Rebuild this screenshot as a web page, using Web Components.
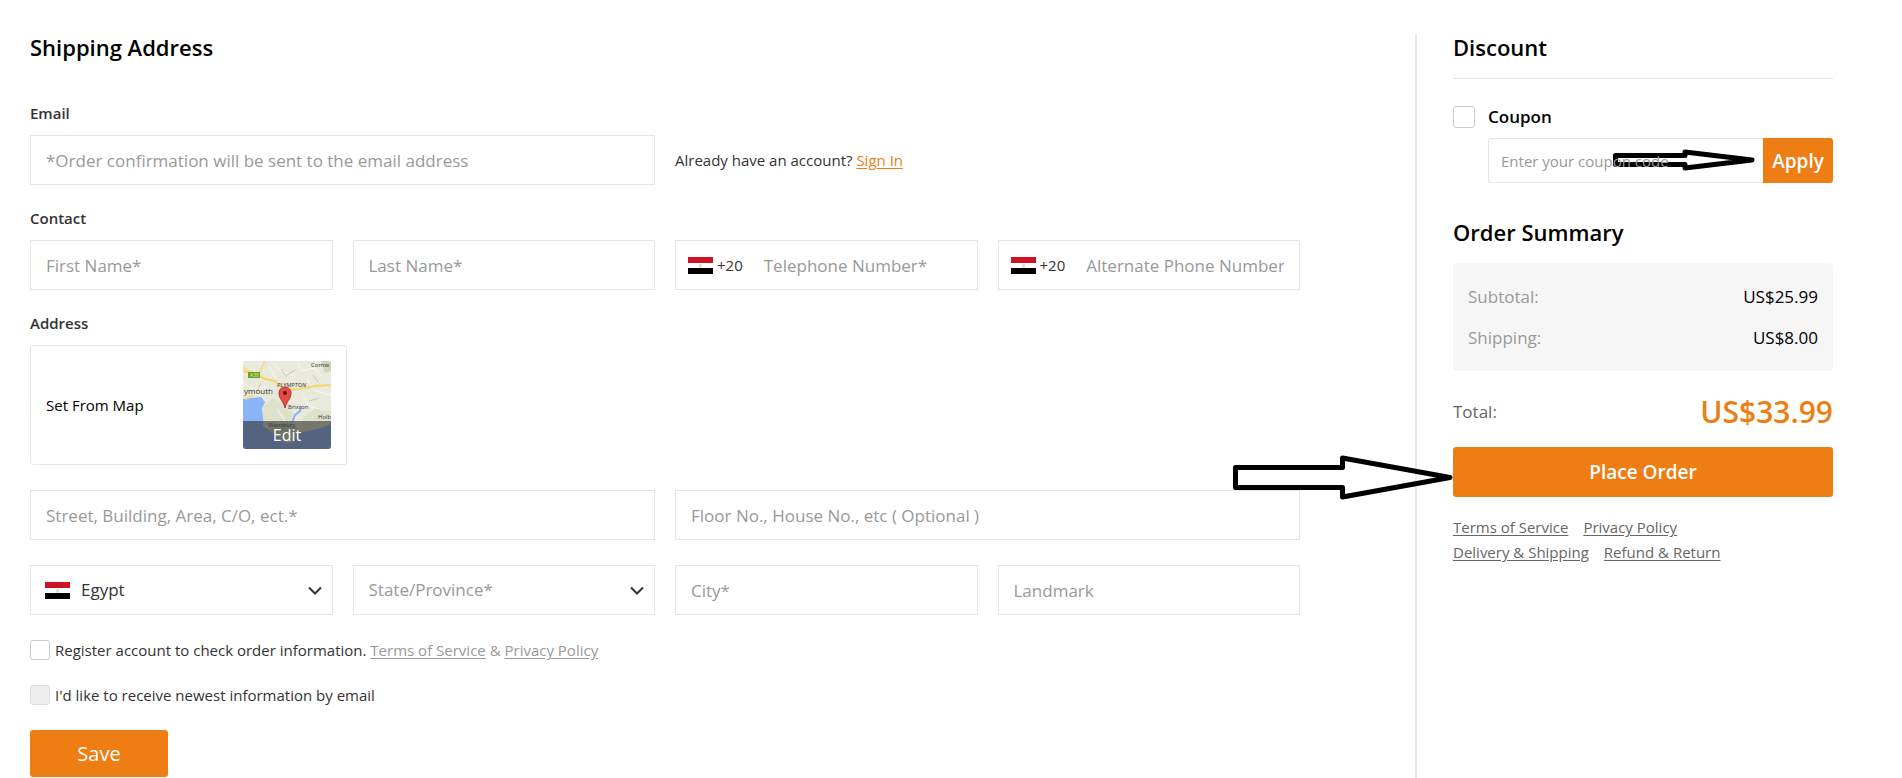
<!DOCTYPE html>
<html lang="en">
<head>
<meta charset="utf-8">
<title>Checkout</title>
<style>
  body { margin: 0; font: 15px/20px "Open Sans", "Noto Sans", sans-serif; color: #333; background: #fff; }
</style>
</head>
<body>
<checkout-page></checkout-page>

<script>
const base = `
  *, *::before { box-sizing: border-box; }
  input, button, select { font: inherit; color: inherit; margin: 0; }
  h2, h3 { margin: 0; }
  a { color: inherit; text-underline-offset: 2px; }
`;

function define(name, html, setup) {
  const template = document.createElement('template');
  template.innerHTML = html;
  customElements.define(name, class extends HTMLElement {
    constructor() {
      super();
      this.attachShadow({ mode: 'open' }).append(template.content.cloneNode(true));
    }
    connectedCallback() {
      if (setup) setup(this, this.shadowRoot);
    }
  });
}

/* Flag of Egypt */
define('flag-egypt', `
  <style>:host { display: block; flex: none; width: 25px; height: 17px; } svg { display: block; }</style>
  <svg width="25" height="17" viewBox="0 0 25 17" aria-hidden="true">
    <rect width="25" height="17" fill="#fff"/>
    <rect width="25" height="6" fill="#ce1126"/>
    <rect y="11" width="25" height="6" fill="#000"/>
    <path d="M11.5 7h2l.5 3.500h-3z" fill="#ecd9a4"/>
  </svg>`);

/* Text box, with an optional visible label above and leading content in the slot */
define('text-field', `
  <style>${base}
    :host { display: block; min-width: 0; }
    label { display: block; line-height: 18px; font-weight: 600; margin-bottom: 13px; }
    label[hidden] { display: none; }
    .box { display: flex; align-items: center; height: 50px; border: 1px solid #e5e5e5; }
    input { flex: 1; min-width: 0; height: 48px; padding: 0 15px; border: 0; background: none; outline: 0; font-size: 17px; }
    input::placeholder { color: #999; opacity: 1; }
    .box:focus-within { border-color: #ee7e13; }
  </style>
  <label for="input" hidden></label>
  <div class="box"><slot></slot><input id="input" type="text"></div>`,
  (host, root) => {
    const input = root.querySelector('input');
    const label = root.querySelector('label');
    const placeholder = host.getAttribute('placeholder') || host.getRootNode().host.getAttribute('placeholder');
    input.placeholder = placeholder;
    input.type = host.getAttribute('type') || 'text';
    if (host.hasAttribute('label')) {
      label.textContent = host.getAttribute('label');
      label.hidden = false;
    } else {
      input.setAttribute('aria-label', placeholder);
    }
  });

/* Text box with a country code; its placeholder is read from this host */
define('phone-field', `
  <style>
    :host { display: block; min-width: 0; }
    .code { display: flex; align-items: center; gap: 4px; padding: 0 6px 0 12px; }
  </style>
  <text-field type="tel"><span class="code"><flag-egypt></flag-egypt><span>+20</span></span></text-field>`,
  (host, root) => {
    const input = root.querySelector('text-field').shadowRoot?.querySelector('input');
    if (input) {
      input.placeholder = host.getAttribute('placeholder');
      input.setAttribute('aria-label', input.placeholder);
    }
  });

define('select-field', `
  <style>${base}
    :host { display: block; min-width: 0; }
    .box { display: grid; grid-template-columns: minmax(0, 1fr); align-items: center; height: 50px; border: 1px solid #e5e5e5; }
    .box > * { grid-area: 1 / 1; }
    select { width: 100%; height: 100%; padding: 0 40px 0 15px; border: 0; background: none; appearance: none; outline: 0; font-size: 17px; }
    :host([hint]) select { color: #999; }
    :host([flag]) select { padding-left: 50px; }
    ::slotted(flag-egypt) { grid-area: 1 / 1; margin-left: 14px; }
    svg { justify-self: end; margin-right: 10px; pointer-events: none; }
  </style>
  <div class="box">
    <slot></slot>
    <select><option></option></select>
    <svg width="14" height="9" viewBox="0 0 14 9" fill="none" stroke="#333" stroke-width="2" aria-hidden="true"><path d="M1 1.500l6 6 6-6"/></svg>
  </div>`,
  (host, root) => {
    root.querySelector('option').textContent = host.getAttribute('value');
    root.querySelector('select').setAttribute('aria-label', host.getAttribute('name'));
  });

define('check-box', `
  <style>${base}
    :host { display: flex; align-items: center; --size: 20px; --gap: 5px; }
    input { appearance: none; flex: none; width: var(--size); height: var(--size); border: 1px solid #ccc; border-radius: 3px; background: #fff; }
    input:checked { background: #ee7e13; }
    input:disabled { background: #eee; border-color: #ddd; }
    label { padding-left: var(--gap); }
  </style>
  <input id="c" type="checkbox"><label for="c"><slot></slot></label>`,
  (host, root) => { root.querySelector('input').disabled = host.hasAttribute('disabled'); });

define('orange-button', `
  <style>${base}
    :host { display: block; }
    button { display: block; width: 100%; height: 100%; padding: 0; border: 0; border-radius: var(--radius, 3px); background: #ee7e13; color: #fff; font-size: inherit; cursor: pointer; }
  </style>
  <button type="button"><slot></slot></button>`);

define('map-card', `
  <style>${base}
    :host { display: flex; align-items: center; justify-content: space-between; width: 317px; padding: 15px; border: 1px solid #e5e5e5; border-radius: 3px; color: #000; box-sizing: border-box; }
    .map { position: relative; flex: none; width: 88px; height: 88px; border-radius: 3px; overflow: hidden; }
    svg { display: block; }
    button { position: absolute; left: 0; bottom: 0; width: 100%; height: 28px; padding: 0; border: 0; background: rgba(51, 51, 51, .62); color: #fff; font-size: 16px; line-height: 26px; }
  </style>
  <span>Set From Map</span>
  <div class="map">
    <svg width="88" height="88" viewBox="0 0 88 88" font-family="Open Sans, sans-serif" fill="none">
      <rect width="88" height="88" fill="#e9e9dd"/>
      <path d="M20 45l10-8 12 6 10 12-8 14-24-4zM60 56l14-10 14 6v20H58z" fill="#dde3cb"/>
      <path d="M78 0h10v10l-6 2zM25 68l20-6 14 8-4 10-28-2z" fill="#c9d8b2"/>
      <path d="M0 38l8-1 10-1 4 5-3 6 1 10 0 8 6 4 8 7 10 6 7-2 2-6 8-3 9-2 8-2 10-4 0 26H0z" fill="#8ab4f8"/>
      <path d="M5 50l3 8 2 12M49 62l3-8 5-4 1-4" stroke="#8ab4f8" stroke-width="2"/>
      <path d="M0 22l10 6 12-2 8 6M30 3l10 8 12 4M55 2l4 8 12-3 8 9M64 18l8 12 16 4M60 35l6 10 14 4M25 4l8 14M34 48l8 12" stroke="#f8f8f2"/>
      <path d="M38 8l6 8M52 9l-8 5M70 14l5 7M14 30l4-8M66 40l10-3M72 58l8-5" stroke="#c9cabd"/>
      <path d="M0 10l10 2 12 6 10 2 8 9 16-1 16-3 16-1" stroke="#f3d866" stroke-width="2"/>
      <path d="M22 0l-8 17M2 38l8-4M0 6l14 9" stroke="#f6dd83" stroke-width="2"/>
      <rect x="5" y="11" width="12" height="6" fill="#6f9e23"/>
      <text x="7" y="16" font-size="5" fill="#dfe9c8">A38</text>
      <g fill="#333">
        <text x="68" y="6" font-size="6">Cornw</text>
        <text x="34" y="26" font-size="6" font-style="italic">PLYMPTON</text>
        <text x="1" y="33" font-size="8">ymouth</text>
        <text x="45" y="48" font-size="6">Brixton</text>
        <text x="75" y="58" font-size="6">Holb</text>
        <text x="25" y="66" font-size="6">Wembury</text>
      </g>
      <path d="M42 47c-1-6-6-9-6-15a6 6 0 0 1 12 0c0 6-5 9-6 15z" fill="#e94b42" stroke="#b3312b"/>
      <circle cx="42" cy="32" r="2" fill="#5c120f"/>
    </svg>
    <button type="button">Edit</button>
  </div>`);

define('shipping-form', `
  <style>${base}
    :host { display: block; }
    h2 { font-size: 22px; line-height: 26px; font-weight: 600; color: #000; margin-bottom: 44px; }
    h3 { font-size: 15px; line-height: 18px; font-weight: 600; margin: 24px 0 13px; }
    .row { display: grid; grid-template-columns: repeat(4, minmax(0, 1fr)); column-gap: 20px; }
    .wide { grid-column: span 2; }
    .signin { align-self: end; line-height: 50px; }
    .signin a { color: #ee7e13; }
    .row + .row, map-card + .row { margin-top: 25px; }
    check-box { margin-top: 25px; }
    .legal { color: #999; }
    orange-button { width: 138px; height: 47px; margin-top: 25px; font-size: 20px; }
  </style>
  <h2>Shipping Address</h2>
  <div class="row">
    <text-field class="wide" type="email" label="Email" placeholder="*Order confirmation will be sent to the email address"></text-field>
    <div class="wide signin">Already have an account? <a href="#signin">Sign In</a></div>
  </div>
  <h3>Contact</h3>
  <div class="row">
    <text-field placeholder="First Name*"></text-field>
    <text-field placeholder="Last Name*"></text-field>
    <phone-field placeholder="Telephone Number*"></phone-field>
    <phone-field placeholder="Alternate Phone Number"></phone-field>
  </div>
  <h3>Address</h3>
  <map-card></map-card>
  <div class="row">
    <text-field class="wide" placeholder="Street, Building, Area, C/O, ect.*"></text-field>
    <text-field class="wide" placeholder="Floor No., House No., etc ( Optional )"></text-field>
  </div>
  <div class="row">
    <select-field flag name="Country" value="Egypt"><flag-egypt></flag-egypt></select-field>
    <select-field hint name="State or province" value="State/Province*"></select-field>
    <text-field placeholder="City*"></text-field>
    <text-field placeholder="Landmark"></text-field>
  </div>
  <check-box>Register account to check order information. <span class="legal"><a href="#terms">Terms of Service</a> &amp; <a href="#privacy">Privacy Policy</a></span></check-box>
  <check-box disabled>I'd like to receive newest information by email</check-box>
  <orange-button>Save</orange-button>`);

define('coupon-box', `
  <style>${base}
    :host { display: block; }
    check-box { --size: 22px; --gap: 13px; height: 22px; color: #000; font-size: 17px; font-weight: 600; }
    .entry { position: relative; display: flex; margin: 10px 0 0 35px; height: 45px; }
    input { position: relative; flex: 1; min-width: 0; padding: 0 12px; border: 1px solid #e5e5e5; border-right: 0; border-radius: 3px 0 0 3px; background: none; outline: 0; }
    input::placeholder { color: #999; opacity: 1; }
    orange-button { width: 70px; font-size: 19px; font-weight: 600; --radius: 0 3px 3px 0; }
    svg { position: absolute; top: 11px; right: 78px; }
  </style>
  <check-box>Coupon</check-box>
  <div class="entry">
    <svg width="142" height="22" viewBox="0 0 142 22" fill="none" stroke="#000" stroke-width="5" stroke-linejoin="round" aria-hidden="true"><path d="M2.500 6.500H72V3L139 11 72 19v-3.500H2.500z"/></svg>
    <input type="text" placeholder="Enter your coupon code" aria-label="Coupon code">
    <orange-button>Apply</orange-button>
  </div>`);

define('order-summary', `
  <style>${base}
    :host { display: block; }
    h2 { font-size: 22px; line-height: 26px; font-weight: 600; color: #000; }
    .discount { padding-bottom: 18px; border-bottom: 1px solid #e5e5e5; margin-bottom: 27px; }
    .summary { margin: 36px 0 18px; }
    dl { margin: 0; padding: 13px 15px; background: #f6f6f6; border-radius: 3px; font-size: 17px; line-height: 41px; }
    dl div, .total { display: flex; justify-content: space-between; align-items: center; }
    dt { color: #999; }
    dd { margin: 0; color: #000; }
    .total { padding-top: 6px; font-size: 17px; line-height: 70px; color: #666; }
    .total strong { font-size: 30px; font-weight: 600; color: #ee7e13; }
    .place { position: relative; }
    .place svg { position: absolute; top: 8px; right: 100%; }
    orange-button { height: 50px; font-size: 19px; font-weight: 600; }
    nav { display: flex; flex-wrap: wrap; column-gap: 15px; width: 300px; margin-top: 18px; line-height: 25px; color: #666; }
  </style>
  <h2 class="discount">Discount</h2>
  <coupon-box></coupon-box>
  <h2 class="summary">Order Summary</h2>
  <dl>
    <div><dt>Subtotal:</dt><dd>US$25.99</dd></div>
    <div><dt>Shipping:</dt><dd>US$8.00</dd></div>
  </dl>
  <div class="total"><span>Total:</span><strong>US$33.99</strong></div>
  <div class="place">
    <svg width="220" height="46" viewBox="0 0 220 46" fill="none" stroke="#000" stroke-width="5" stroke-linejoin="round" aria-hidden="true"><path d="M2.500 12.500h107V3L217 22.500 109.500 42v-9.500H2.500z"/></svg>
    <orange-button>Place Order</orange-button>
  </div>
  <nav>
    <a href="#terms">Terms of Service</a><a href="#privacy">Privacy Policy</a>
    <a href="#delivery">Delivery &amp; Shipping</a><a href="#refund">Refund &amp; Return</a>
  </nav>`);

define('checkout-page', `
  <style>${base}
    :host { display: flex; gap: 115px; min-height: 100vh; padding: 34px 69px 0 30px; box-sizing: border-box; }
    main { flex: 1; min-width: 0; }
    aside { flex: none; width: 418px; padding-left: 36px; border-left: 2px solid #e8e8e8; }
  </style>
  <main><shipping-form></shipping-form></main>
  <aside><order-summary></order-summary></aside>`);
</script>
</body>
</html>
